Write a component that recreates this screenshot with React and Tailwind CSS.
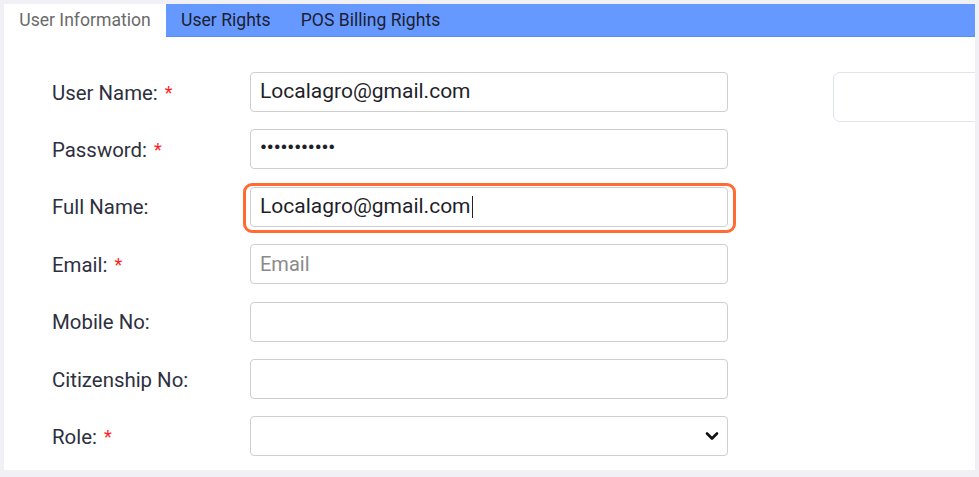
import React from "react";

const font = { fontFamily: "Roboto, 'Liberation Sans', sans-serif" };

function Label({ text, req }) {
  return (
    <div className="w-[198px] shrink-0 text-[20.4px] text-[#2e3040] flex items-center pt-[2px]">
      <span>{text}</span>
      {req && <span className="ml-[7px] text-[18px] text-[#ff1f1f] relative top-[-1px]">*</span>}
    </div>
  );
}

function Box({ children, className = "" }) {
  return (
    <div className={"w-[478px] h-[40px] rounded-[4px] border border-[#cfcfcf] bg-white flex items-center px-[9px] text-[21px] text-[#1f1f2a] " + className}>
      {children}
    </div>
  );
}

export default function App() {
  return (
    <div style={font} className="w-[979px] h-[477px] bg-[#f1f1f5] pt-[4px] pl-[4px] pr-[4px] pb-[7px]">
      <div className="h-full bg-white overflow-hidden flex flex-col">
        <div className="h-[33px] flex shrink-0">
          <div className="w-[162px] flex items-center justify-center text-[17.6px] text-[#6a6a6a] bg-white">User Information</div>
          <div className="flex-1 bg-[#6699ff] border-b border-[#5a8cf5] flex items-center text-[17.6px] text-[#1c2030]">
            <span className="ml-[15px]">User Rights</span>
            <span className="ml-[30px]">POS Billing Rights</span>
          </div>
        </div>
        <div className="flex pt-[35px]">
          <div className="flex flex-col gap-[17.4px] pl-[48px]">
            <div className="flex h-[40px]">
              <Label text="User Name:" req />
              <Box>Localagro@gmail.com</Box>
            </div>
            <div className="flex h-[40px]">
              <Label text="Password:" req />
              <Box>
                <span className="text-[19px] font-bold tracking-[0px] relative top-[-1px]">•••••••••••</span>
              </Box>
            </div>
            <div className="flex h-[40px]">
              <Label text="Full Name:" />
              <div className="relative">
                <div className="absolute left-[-7px] right-[-8px] top-[-4px] bottom-[-6px] border-[3px] border-[#ff6a35] rounded-[9px]" />
                <Box className="border-[#a9cbfb] border-[1.5px]">
                  <span>Localagro@gmail.com</span>
                  <span className="inline-block w-[1px] h-[22px] bg-[#222] ml-[1px]" />
                </Box>
              </div>
            </div>
            <div className="flex h-[40px]">
              <Label text="Email:" req />
              <Box><span className="text-[#8a8a8a] text-[20px]">Email</span></Box>
            </div>
            <div className="flex h-[40px]">
              <Label text="Mobile No:" />
              <Box />
            </div>
            <div className="flex h-[40px]">
              <Label text="Citizenship No:" />
              <Box />
            </div>
            <div className="flex h-[40px]">
              <Label text="Role:" req />
              <Box className="justify-end pr-[8px]">
                <svg width="14" height="10" viewBox="0 0 14 10">
                  <path d="M2 2.5 L7 7.5 L12 2.5" fill="none" stroke="#111" strokeWidth="2.6" strokeLinecap="round" strokeLinejoin="round" />
                </svg>
              </Box>
            </div>
          </div>
          <div className="ml-[105px] w-[170px] h-[50px] shrink-0 rounded-[7px] border border-[#e0e4ec]" />
        </div>
      </div>
    </div>
  );
}
